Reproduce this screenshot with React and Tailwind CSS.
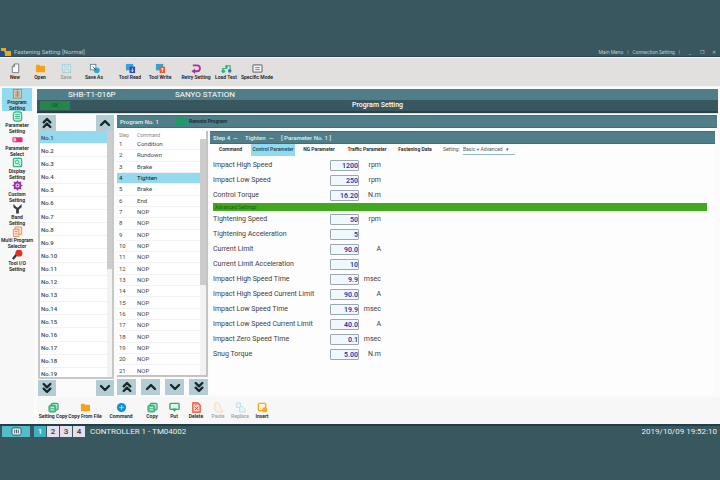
import React from "react";
import { ChevronUp, ChevronDown, ChevronsUp, ChevronsDown } from "lucide-react";

const glyphs = {
  page: <><path d="M5 1h4.5v9.5h-7V4z" fill="#fafafa" stroke="#74787b" /><path d="M5 1v3H2.5" fill="none" stroke="#74787b" /></>,
  folder: <path d="M1 3q0-1 1-1h2.5l1 1H10q1 0 1 1v5q0 1-1 1H2q-1 0-1-1z" fill="#f5a31c" />,
  disk: <><rect x="1.5" y="1.5" width="9" height="9" fill="#d8f2f8" stroke="#4fbdd6" /><path d="M4 1.5v3h4v-3M3.5 10.500V7h5v3.500" fill="none" stroke="#4fbdd6" /></>,
  saveAs: <><rect x="1.500" y="1.500" width="6" height="6" fill="#fff" stroke="#6a8590" /><circle cx="8.500" cy="8" r="3.200" fill="#2aa9dc" /><path d="M4 4l4 4" stroke="#35505c" /></>,
  read: <><rect x="1" y="1" width="8" height="7" fill="#35a3e0" /><path d="M5 4h6v7H5z" fill="#2450a8" /><path d="M8 5.500v4M6.500 8l1.500 1.500L9.500 8" stroke="#fff" fill="none" strokeWidth=".8" /></>,
  write: <><rect x="1" y="1" width="8" height="7" fill="#35a3d0" /><path d="M5 4h6v7H5z" fill="#ee5a34" /><path d="M8 9.500v-4M6.500 7L8 5.500 9.500 7" stroke="#fff" fill="none" strokeWidth=".8" /></>,
  retry: <><path d="M2 2.500h4.500a3 3 0 0 1 0 6.500H3" fill="none" stroke="#b02fa0" strokeWidth="2" /><path d="M4.500 6v6L.5 9z" fill="#b02fa0" /></>,
  graph: <><path d="M2 9.500V6h4V3h4v4" fill="none" stroke="#35b07e" strokeWidth="1.300" /><circle cx="2.500" cy="9" r="2" fill="#35b07e" /><circle cx="6" cy="4" r="1.500" fill="#35b07e" /><circle cx="9.500" cy="8.500" r="2" fill="#3a7fa8" /></>,
  panel: <><rect x="1" y="2" width="10" height="8" rx="1" fill="#f4f4f4" stroke="#77797b" strokeWidth="1.300" /><path d="M3.500 5h5M3.500 7.200h5" stroke="#77797b" /></>,
  list: <><rect x="1.500" y="1.500" width="9" height="9.500" fill="#d9c9b0" stroke="#9a8c7a" /><path d="M3.500 4.500h5M3.500 6.500h5M3.500 8.500h5M6 1v9" stroke="#8d8376" strokeWidth=".8" /></>,
  data: <><rect x="1.500" y="1" width="9" height="10" rx="2.500" fill="#bff0dc" stroke="#32b886" strokeWidth="1.300" /><path d="M3.500 4h5M3.500 6h5M3.500 8h5" stroke="#32b886" /></>,
  toggle: <><rect x=".5" y="3.500" width="11" height="5.500" rx="1" fill="#e0307c" /><rect x="1.500" y="4.500" width="3" height="3.500" fill="#f8b8d4" /></>,
  scan: <><rect x="1.500" y="1.500" width="9" height="9" rx="1" fill="#c8f2e2" stroke="#32b886" strokeWidth="1.300" /><circle cx="5.500" cy="5.500" r="2" fill="none" stroke="#32b886" /><path d="M7 7l2.500 2.500" stroke="#32b886" /></>,
  gear: <><circle cx="6" cy="6" r="3.300" fill="#f2d4f5" stroke="#a02cb0" strokeWidth="2" /><circle cx="6" cy="6" r="1.200" fill="#a02cb0" /><path d="M6 .5v2M6 9.500v2M.5 6h2M9.500 6h2M2 2l1.500 1.500M8.500 8.500L10 10M10 2L8.500 3.500M3.500 8.500L2 10" stroke="#a02cb0" strokeWidth="1.300" /></>,
  fork: <path d="M1.500 1v3.500L4.500 7v4.500h3V7l3-2.500V1L8 3.500 6.500 5h-1L4 3.500z" fill="#3a3d42" />,
  stack: <><path d="M3.500 1h7v8h-7z" fill="#fde2d0" stroke="#f08850" /><path d="M1.500 3.500h6v8h-6z" fill="#fde2d0" stroke="#f08850" /><path d="M3 6h3M3 8.500h3" stroke="#f08850" /></>,
  probe: <><path d="M1 11l4-5" stroke="#33363a" strokeWidth="2.500" /><circle cx="7.500" cy="4.500" r="3.800" fill="#e52f1e" /></>,
  copy: <><rect x="3.500" y="1.500" width="7.500" height="7" rx="1.500" fill="#bdebd3" stroke="#2faa74" strokeWidth="1.300" /><rect x="1" y="3.500" width="7.500" height="7.500" rx="1.500" fill="#5cc596" stroke="#2faa74" /><path d="M3 6h3.500M3 8.500h3.500" stroke="#fff" strokeWidth=".8" /></>,
  disc: <><circle cx="6" cy="6" r="5" fill="#128fd2" /><path d="M6 3.500v5M3.500 6h5" stroke="#8fd8f6" strokeWidth="1.300" /></>,
  put: <><rect x="1" y="1.500" width="10" height="6.500" rx="1" fill="#e0f6ec" stroke="#2faa74" strokeWidth="1.500" /><path d="M3.500 7h5L6 11z" fill="#2faa74" /></>,
  remove: <><path d="M2 1h5.500L10 3.500V11H2z" fill="#fbd8d0" stroke="#e0492e" strokeWidth="1.300" /><path d="M4 5l4 4M8 5L4 9M4 3h3" stroke="#e0492e" /></>,
  paste: <path d="M2 1h4l2 3v3l3 4H4L2 8z" fill="#fdeedd" stroke="#f0a868" />,
  replace: <><path d="M1.500 1h4.500v5H1.500z" fill="#e0f2fb" stroke="#6cb8e0" /><path d="M5 5h3l3 3v3H5z" fill="#e0f2fb" stroke="#6cb8e0" /></>,
  insert: <><rect x="1.500" y="1.500" width="8" height="8" rx="1" fill="#fff4d8" stroke="#f2ab22" strokeWidth="1.500" /><circle cx="8.500" cy="8.500" r="2.800" fill="#f2ab22" /></>,
};

const fileTools = [
  { glyph: "page", label: "New", width: "w-6" },
  { glyph: "folder", label: "Open", width: "w-[26px]" },
  { glyph: "disk", label: "Save", width: "w-[26px]", off: true },
  { glyph: "saveAs", label: "Save As", width: "w-[30px]" },
  { glyph: "read", label: "Tool Read", width: "w-[30px] ml-1.5" },
  { glyph: "write", label: "Tool Write", width: "w-[30px]" },
  { glyph: "retry", label: "Retry Setting", width: "w-[30px] ml-1.5" },
  { glyph: "graph", label: "Load Test", width: "w-[30px]" },
  { glyph: "panel", label: "Specific Mode", width: "w-8" },
];

const sections = [
  { glyph: "list", lines: ["Program", "Setting"] },
  { glyph: "data", lines: ["Parameter", "Setting"] },
  { glyph: "toggle", lines: ["Parameter", "Select"] },
  { glyph: "scan", lines: ["Display", "Setting"] },
  { glyph: "gear", lines: ["Custom", "Setting"] },
  { glyph: "fork", lines: ["Band", "Setting"] },
  { glyph: "stack", lines: ["Multi Program", "Selector"] },
  { glyph: "probe", lines: ["Tool I/O", "Setting"] },
];

const editTools = [
  { glyph: "copy", label: "Setting Copy", width: "w-8" },
  { glyph: "folder", label: "Copy From File", width: "w-8" },
  { glyph: "disc", label: "Command", width: "w-8 ml-1" },
  { glyph: "copy", label: "Copy", width: "w-[22px] ml-1" },
  { glyph: "put", label: "Put", width: "w-[22px]" },
  { glyph: "remove", label: "Delete", width: "w-[22px]" },
  { glyph: "paste", label: "Paste", width: "w-[22px]", off: true },
  { glyph: "replace", label: "Replace", width: "w-[22px]", off: true },
  { glyph: "insert", label: "Insert", width: "w-[22px]" },
];

const commands = ["Condition", "Rundown", "Brake", "Tighten", "Brake", "End"];
const steps = Array.from({ length: 21 }, (_, i) => commands[i] || "NOP");
const programs = Array.from({ length: 19 }, (_, i) => `No.${i + 1}`);

const basic = [
  ["Impact High Speed", "1200", "rpm"],
  ["Impact Low Speed", "250", "rpm"],
  ["Control Torque", "16.20", "N.m"],
];
const advanced = [
  ["Tightening Speed", "50", "rpm"],
  ["Tightening Acceleration", "5", ""],
  ["Current Limit", "90.0", "A"],
  ["Current Limit Acceleration", "10", ""],
  ["Impact High Speed Time", "9.9", "msec"],
  ["Impact High Speed Current Limit", "90.0", "A"],
  ["Impact Low Speed Time", "19.9", "msec"],
  ["Impact Low Speed Current Limit", "40.0", "A"],
  ["Impact Zero Speed Time", "0.1", "msec"],
  ["Snug Torque", "5.00", "N.m"],
];

function Glyph({ name }) {
  return <svg viewBox="0 0 12 12" className="h-[11px] w-[11px] shrink-0" aria-hidden="true">{glyphs[name]}</svg>;
}

function Tool({ glyph, label, width, off }) {
  return (
    <button disabled={off} className={`flex shrink-0 flex-col items-center ${width} ${off ? "opacity-40" : ""}`}>
      <Glyph name={glyph} />
      <span className="whitespace-nowrap text-[5px] font-semibold leading-[7px] text-[#222]">{label}</span>
    </button>
  );
}

function Arrow({ icon: Icon, label, className = "" }) {
  return (
    <button aria-label={label} className={`flex h-4 items-center justify-center bg-[#b3cdd3] text-[#17262b] ${className}`}>
      <Icon size={16} strokeWidth={3.5} />
    </button>
  );
}

function Field({ row: [label, value, unit] }) {
  const id = label.toLowerCase().replaceAll(" ", "-");
  return (
    <div className="flex h-[15px] items-center text-[7px] leading-[9px] text-[#3c3c3c]">
      <label htmlFor={id} className="w-[117px] whitespace-nowrap">{label}</label>
      <input
        id={id}
        defaultValue={value}
        className="h-[11px] w-[29px] rounded-[1px] border border-[#9ca8b0] bg-[#eff8fd] text-right text-[7px] font-semibold text-[#2638a8]"
      />
      <span className="w-[22px] text-right">{unit}</span>
    </div>
  );
}

export default function App() {
  return (
    <div className="flex min-h-screen flex-col bg-[#38575f] pt-[47px] font-['Roboto','Open_Sans',sans-serif]">
      <header className="flex h-[10px] items-center border-b border-[#2c4850] text-[6px] leading-[8px] text-[#b9cbd0]">
        <svg viewBox="0 0 12 9" className="h-[9px] w-3">
          <path d="M1 1h5v3h5v5H5V5H1z" fill="#f5a31c" />
          <path d="M0 4h4v5H0z" fill="#174f9c" />
        </svg>
        <h1 className="ml-0.5">Fastening Setting [Normal]</h1>
        <nav className="ml-auto flex items-center text-[5px]">
          <button>Main Menu</button>
          <span className="mx-1">|</span>
          <button>Connection Setting</button>
          <span className="mx-1">|</span>
          <button aria-label="Minimize" className="w-3">_</button>
          <button aria-label="Restore" className="w-3">❐</button>
          <button aria-label="Close" className="w-3">✕</button>
        </nav>
      </header>

      <div className="flex h-[30px] items-center border-y border-[#f5f5f5] bg-[#e1e0df] pl-[3px]">
        {fileTools.map((t) => <Tool key={t.label} {...t} />)}
      </div>

      <div className="flex bg-[#fbfbfb] pt-px">
        <aside className="flex w-[34px] shrink-0 flex-col bg-[#f8f8f8] px-0.5">
          {sections.map(({ glyph, lines }, i) => (
            <button key={i} className={`flex h-[23px] flex-col items-center justify-center ${i === 0 ? "bg-[#94daee]" : ""}`}>
              <Glyph name={glyph} />
              {lines.map((l) => (
                <span key={l} className="whitespace-nowrap text-[5px] font-semibold leading-[6px] text-[#222]">{l}</span>
              ))}
            </button>
          ))}
        </aside>

        <main className="flex min-w-0 flex-1 flex-col pl-[3px]">
          <div className="mr-0.5 mt-px text-[8px] leading-[11px] text-white">
            <div className="flex h-[11px] items-center bg-[#4f7e88] pl-[31px]">
              <span className="w-[107px]">SHB-T1-016P</span>
              <span>SANYO STATION</span>
            </div>
            <div className="flex h-[13px] items-center border-b-2 border-[#24444c] bg-[#38575f] pl-[3px]">
              <span className="h-[9px] w-[30px] bg-[#24864a] text-center text-[5px] leading-[9px] text-[#0d4f2a]">OK</span>
              <h2 className="flex-1 pr-[33px] text-center text-[7px] font-medium">Program Setting</h2>
            </div>
          </div>

          <div className="mr-[3px] flex gap-[3px] border-t border-[#c9dfe5] pt-px">
            <section className="ml-px w-[76px] shrink-0">
              <div className="flex justify-between">
                <Arrow icon={ChevronsUp} label="First program" className="w-[18px]" />
                <Arrow icon={ChevronUp} label="Previous program" className="w-[18px]" />
              </div>
              <div className="flex h-[248px] overflow-hidden border-2 border-t-0 border-[#c8c8c8] bg-white">
                <ul className="flex h-[250px] flex-1 flex-col text-[6px] font-medium text-[#444]">
                  {programs.map((p, i) => (
                    <li key={p} className={`flex flex-1 items-center border-b border-[#f1f1f1] pl-px ${i === 0 ? "bg-[#94daee]" : ""}`}>{p}</li>
                  ))}
                </ul>
                <div className="w-[5px] bg-[#f2f2f2]"><div className="h-[138px] bg-[#cccccc]" /></div>
              </div>
              <div className="mt-px flex justify-between">
                <Arrow icon={ChevronsDown} label="Last program" className="w-[18px]" />
                <Arrow icon={ChevronDown} label="Next program" className="w-[18px]" />
              </div>
            </section>

            <section className="min-w-0 flex-1">
              <div className="flex h-[13px] items-center border-y border-[#3f6e78] bg-[#4f7e88] pl-[3px] text-[6px] font-medium text-[#e3eef0]">
                <span className="w-14">Program No. 1</span>
                <span className="mr-0.5 h-[9px] w-[11px] bg-[#1f9a6c]" />
                <span className="text-[5px] font-semibold text-[#122c33]">Remote Program</span>
              </div>

              <div className="mt-[3px] flex gap-0.5">
                <div className="w-[91px] shrink-0">
                  <div className="flex h-[246px] overflow-hidden border-b-2 border-r-2 border-[#c4c4c4] bg-white">
                    <table className="h-[246px] flex-1 table-fixed border-collapse text-left text-[6px] leading-[8px] text-[#444]">
                      <thead>
                        <tr className="text-[5px] text-[#888]">
                          <th className="w-[20px] p-0 pl-0.5 font-normal">Step</th>
                          <th className="p-0 font-normal">Command</th>
                        </tr>
                      </thead>
                      <tbody>
                        {steps.map((s, i) => (
                          <tr key={i} className={`border-b border-[#f2f2f2] ${i === 3 ? "bg-[#94daee] text-[#111]" : ""}`}>
                            <td className="p-0 pl-0.5">{i + 1}</td>
                            <td className="p-0">{s}</td>
                          </tr>
                        ))}
                      </tbody>
                    </table>
                    <div className="mt-2 w-1.5 bg-[#f2f2f2]"><div className="h-[146px] bg-[#cccccc]" /></div>
                  </div>
                  <div className="mt-0.5 flex justify-between">
                    <Arrow icon={ChevronsUp} label="First step" className="w-[19px]" />
                    <Arrow icon={ChevronUp} label="Previous step" className="w-[19px]" />
                    <Arrow icon={ChevronDown} label="Next step" className="w-[19px]" />
                    <Arrow icon={ChevronsDown} label="Last step" className="w-[19px]" />
                  </div>
                </div>

                <div className="mr-0.5 min-w-0 flex-1 bg-[#fdfdfd]">
                  <div className="flex h-[13px] items-center border-y border-[#3f6e78] bg-[#4f7e88] pl-[3px] text-[6px] font-medium text-[#e3eef0]">
                    <span className="w-5">Step 4</span>
                    <span className="w-3">—</span>
                    <span className="w-6">Tighten</span>
                    <span className="w-3">—</span>
                    <span>[ Parameter No. 1 ]</span>
                  </div>
                  <div role="tablist" className="flex h-3 items-center whitespace-nowrap text-[5px] font-semibold text-[#222]">
                    <button role="tab" className="h-3 w-[41px]">Command</button>
                    <button role="tab" aria-selected="true" className="h-3 w-11 bg-[#94daee] text-[#14505f]">Control Parameter</button>
                    <button role="tab" className="h-3 w-12">NG Parameter</button>
                    <button role="tab" className="h-3 w-12">Traffic Parameter</button>
                    <button role="tab" className="h-3 w-12">Fastening Data</button>
                    <label htmlFor="level" className="ml-1 w-5 font-normal text-[#555]">Setting:</label>
                    <select id="level" className="h-[10px] w-[52px] appearance-none border-b border-[#8fb8c4] text-[5px] font-normal text-[#555]">
                      <option>Basic + Advanced &nbsp; ▾</option>
                    </select>
                  </div>
                  <form className="pl-[3px] pt-0.5">
                    {basic.map((r) => <Field key={r[0]} row={r} />)}
                    <h3 className="mr-2 h-2 bg-[#41a820] pl-0.5 text-[5px] leading-[8px] text-[#176010]">Advanced Settings</h3>
                    <div className="pt-px">
                      {advanced.map((r) => <Field key={r[0]} row={r} />)}
                    </div>
                  </form>
                </div>
              </div>
            </section>
          </div>

          <div className="mt-px flex h-[27px] items-center bg-[#f7f7f7]">
            {editTools.map((t) => <Tool key={t.label} {...t} />)}
          </div>
        </main>
      </div>

      <footer className="flex h-[13px] items-center border-t-2 border-[#203f47] pl-0.5 pr-[3px] text-[8px] leading-[11px] text-[#e8eff1]">
        <button aria-label="Controller status" className="mr-1 flex h-[11px] w-7 items-center justify-center bg-[#55bccb]">
          <svg viewBox="0 0 12 10" className="h-[9px] w-[11px]">
            <rect x="1" y="1" width="10" height="8" rx="2" fill="#e6f3f5" stroke="#28525c" />
            <path d="M4 3v4M6 3v4M8 3v4" stroke="#28525c" />
          </svg>
        </button>
        {[1, 2, 3, 4].map((n) => (
          <button key={n} className={`mr-px h-[11px] w-3 font-semibold ${n === 1 ? "bg-[#3fb0c4] text-[#e4f6fa]" : "bg-[#e4e0ec] text-[#444]"}`}>{n}</button>
        ))}
        <span className="ml-1">CONTROLLER 1 - TM04002</span>
        <time className="ml-auto">2019/10/09 19:52:10</time>
      </footer>
    </div>
  );
}
